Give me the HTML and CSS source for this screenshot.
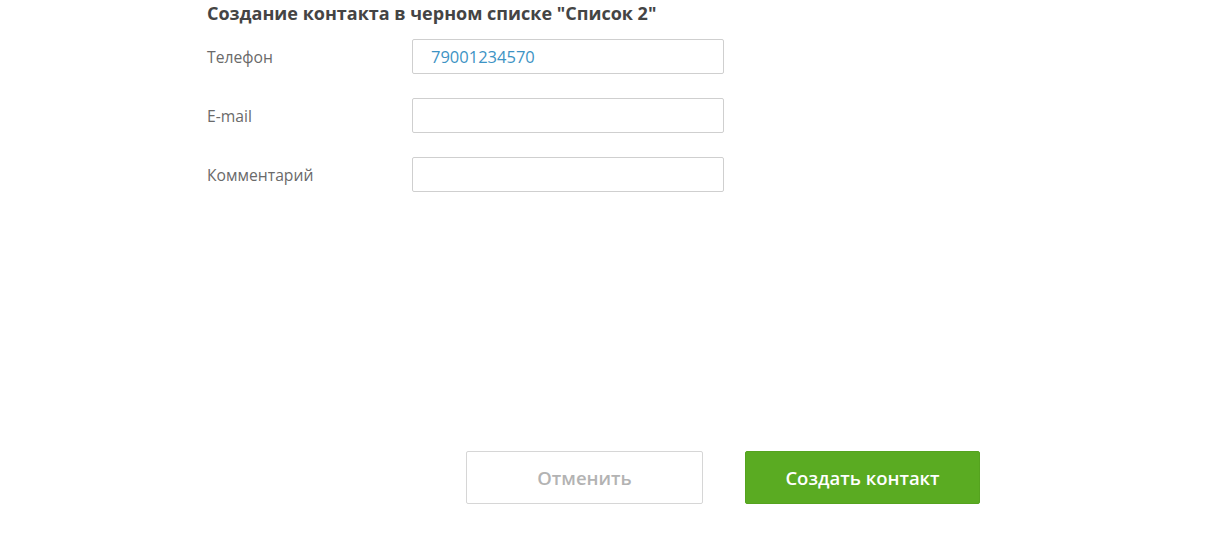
FILE: index.html
```html
<!DOCTYPE html>
<html lang="ru">
<head>
<meta charset="utf-8">
<link rel="stylesheet" href="styles.css">
</head>
<body>
<div class="page">
  <h1 class="title">Создание контакта в черном списке "Список 2"</h1>
  <div class="form">
    <div class="row">
      <label class="label">Телефон</label>
      <div class="input filled">79001234570</div>
    </div>
    <div class="row">
      <label class="label">E-mail</label>
      <div class="input"></div>
    </div>
    <div class="row">
      <label class="label">Комментарий</label>
      <div class="input"></div>
    </div>
  </div>
  <div class="actions">
    <button class="btn cancel">Отменить</button>
    <button class="btn primary">Создать контакт</button>
  </div>
</div>
</body>
</html>
```
FILE: styles.css
```css
html, body {
  margin: 0;
  padding: 0;
  background: #ffffff;
}
body {
  font-family: "Open Sans", "Liberation Sans", sans-serif;
  color: #555555;
}
.page {
  padding: 3px 0 0 207px;
  display: flex;
  flex-direction: column;
}
.title {
  margin: 0;
  font-size: 18px;
  line-height: 20px;
  font-weight: 700;
  color: #444444;
}
.form {
  margin-top: 16px;
  display: flex;
  flex-direction: column;
  gap: 24px;
}
.row {
  display: flex;
  align-items: center;
}
.label {
  width: 205px;
  font-size: 15.7px;
  color: #6a6a6a;
}
.input {
  box-sizing: border-box;
  width: 312px;
  height: 35px;
  border: 1px solid #cfcfcf;
  border-radius: 2px;
  padding: 0 18px;
  font-size: 16.5px;
  line-height: 33px;
}
.input.filled {
  color: #3d93c4;
}
.actions {
  margin-top: 259px;
  margin-left: 259px;
  display: flex;
  gap: 42px;
}
.btn {
  box-sizing: border-box;
  height: 53px;
  border-radius: 2px;
  font-family: "Open Sans", "Liberation Sans", sans-serif;
  font-size: 18.5px;
  font-weight: 600;
  cursor: pointer;
}
.cancel {
  width: 237px;
  background: #ffffff;
  border: 1px solid #d6d6d6;
  color: #b3b3b3;
}
.primary {
  width: 235px;
  background: #5aab22;
  border: 1px solid #55a31f;
  color: #ffffff;
}
```
